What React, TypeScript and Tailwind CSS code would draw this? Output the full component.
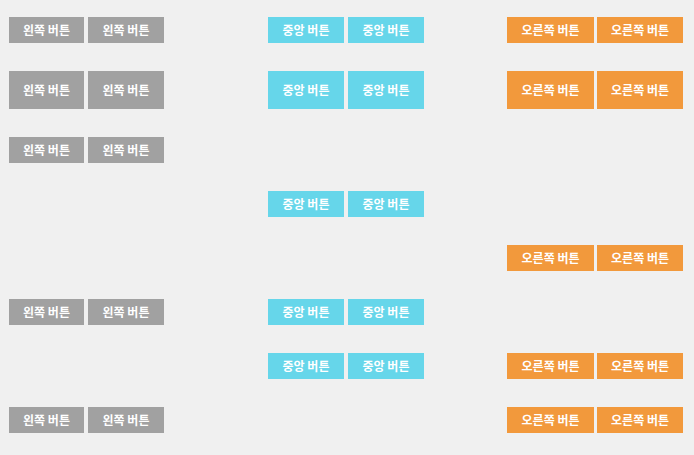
type Tone = 'left' | 'center' | 'right';

const TONE: Record<Tone, { label: string; cls: string; gap: string; widths: [string, string] }> = {
  left: { label: '왼쪽 버튼', cls: 'bg-[#a1a1a1]', gap: 'gap-[4px]', widths: ['w-[75px]', 'w-[76px]'] },
  center: { label: '중앙 버튼', cls: 'bg-[#66d6ea]', gap: 'gap-[4px]', widths: ['w-[76px]', 'w-[76px]'] },
  right: { label: '오른쪽 버튼', cls: 'bg-[#f2993c]', gap: 'gap-[3px]', widths: ['w-[87px]', 'w-[86px]'] },
};

const ROWS: { tones: Tone[]; tall?: boolean }[] = [
  { tones: ['left', 'center', 'right'] },
  { tones: ['left', 'center', 'right'], tall: true },
  { tones: ['left'] },
  { tones: ['center'] },
  { tones: ['right'] },
  { tones: ['left', 'center'] },
  { tones: ['center', 'right'] },
  { tones: ['left', 'right'] },
];

function ButtonPair({ tone, tall }: { tone: Tone; tall?: boolean }) {
  const t = TONE[tone];
  return (
    <div className={`flex ${t.gap} shrink-0`}>
      {t.widths.map((w, i) => (
        <button
          key={i}
          className={`${w} ${tall ? 'h-[38px]' : 'h-[26px]'} ${t.cls} flex items-center justify-center text-white text-[12px] font-bold whitespace-nowrap`}
        >
          {t.label}
        </button>
      ))}
    </div>
  );
}

export default function App() {
  return (
    <div
      className="min-h-screen bg-[#f0f0f0] pl-[9px] pr-[11px] pt-[17px] flex flex-col gap-[28px]"
      style={{ fontFamily: '"Noto Sans CJK KR", "Noto Sans", sans-serif' }}
    >
      {ROWS.map((row, i) => (
        <div key={i} className="flex">
          <div className="flex-1 flex justify-start">
            {row.tones.includes('left') && <ButtonPair tone="left" tall={row.tall} />}
          </div>
          <div className="flex-1 flex justify-center">
            {row.tones.includes('center') && <ButtonPair tone="center" tall={row.tall} />}
          </div>
          <div className="flex-1 flex justify-end">
            {row.tones.includes('right') && <ButtonPair tone="right" tall={row.tall} />}
          </div>
        </div>
      ))}
    </div>
  );
}
